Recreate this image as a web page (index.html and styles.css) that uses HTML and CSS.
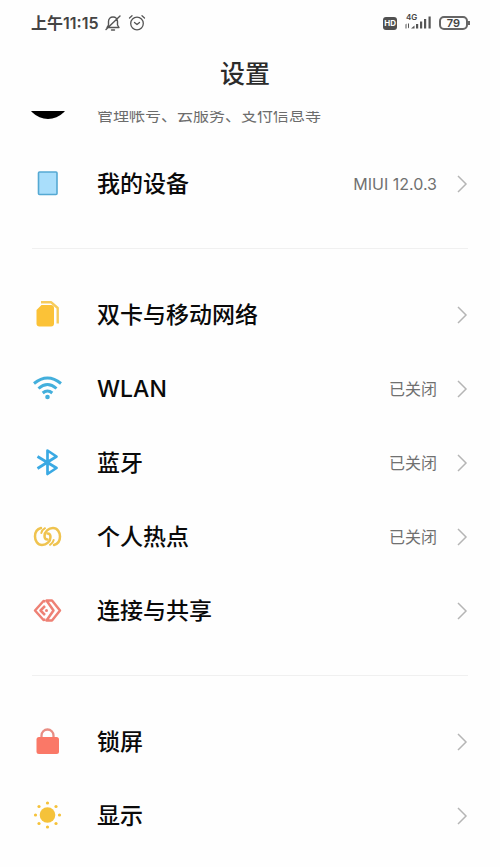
FILE: index.html
```html
<!DOCTYPE html>
<html lang="zh-CN">
<head>
<meta charset="utf-8">
<meta name="viewport" content="width=device-width, initial-scale=1">
<title>设置</title>
<link rel="stylesheet" href="styles.css">
</head>
<body>
<div class="status-bar">
  <span class="clock">上午11:15</span>
  <svg class="status-icon" width="18" height="18" viewBox="0 0 18 18" fill="none" stroke="#555" stroke-width="1.4" stroke-linecap="round" stroke-linejoin="round"><path d="M3 13.5h12L13.500 11V7.500C13.500 4.800 11.600 3 9 3S4.500 4.800 4.500 7.500V11ZM7.500 16h3M16 2 2 15.500"/></svg>
  <svg class="status-icon" width="18" height="18" viewBox="0 0 18 18" fill="none" stroke="#555" stroke-width="1.300" stroke-linecap="round" stroke-linejoin="round"><circle cx="9" cy="9.500" r="6.300"/><path d="M6.500 8.500 9 10.500l2.500-2M1.500 4 4 1.800M16.500 4 14 1.800"/></svg>
  <span class="status-right">
    <span class="hd">HD</span>
    <span class="signal">
      <span class="network">4G</span>
      <svg width="28" height="16" viewBox="0 0 28 16" fill="#555"><path d="M1.500 9.500 2.500 8.500v5h-1ZM4 8.500h1v4l-1 1ZM7 13.500l3.500-3v3ZM12 9h2.200v4.500H12ZM16 6.500h2.200v7H16ZM20 4h2.200v9.500H20ZM24.500 1.500h2.200v12h-2.200Z"/></svg>
    </span>
    <span class="battery">79</span>
  </span>
</div>

<header class="title-bar"><h1>设置</h1></header>

<main class="settings">
  <section class="group">
    <a class="account" href="#account">
      <span class="avatar"></span>
      <span class="account-note">管理帐号、云服务、支付信息等</span>
    </a>
    <a class="row" href="#device">
      <svg class="icon" viewBox="0 0 32 32"><rect x="6.500" y="4" width="18.500" height="22.500" rx="1" fill="#a9defb" stroke="#55a9d3" stroke-width="1.600"/></svg>
      <span class="label">我的设备</span>
      <span class="value">MIUI 12.0.3</span>
      <svg class="chevron" viewBox="0 0 12 20"><path d="m2 2 8 8-8 8"/></svg>
    </a>
  </section>

  <section class="group">
    <a class="row" href="#sim">
      <svg class="icon" viewBox="0 0 32 32"><path d="M4.500 11 9.500 6H19q3 0 3 3v15.500q0 3-3 3H7.500q-3 0-3-3Z" fill="#fbc237"/><path d="M9 3.200H19L25.700 9v15.500" fill="none" stroke="#f6cb5c" stroke-width="2.400" stroke-linejoin="round"/></svg>
      <span class="label">双卡与移动网络</span>
      <svg class="chevron" viewBox="0 0 12 20"><path d="m2 2 8 8-8 8"/></svg>
    </a>
    <a class="row" href="#wlan">
      <svg class="icon" viewBox="0 0 32 32"><g fill="none" stroke="#43afdc" stroke-width="3"><path d="M2 10.500Q15.500-.5 29 10.500"/><path d="M6.500 15.500q9-8 18 0"/><path d="M10.700 20q4.800-4 9.600 0"/></g><circle cx="15.500" cy="24" r="2.300" fill="#43afdc"/></svg>
      <span class="label">WLAN</span>
      <span class="value">已关闭</span>
      <svg class="chevron" viewBox="0 0 12 20"><path d="m2 2 8 8-8 8"/></svg>
    </a>
    <a class="row" href="#bluetooth">
      <svg class="icon" viewBox="0 0 32 32"><path d="M5.500 9.500 24.500 21 15.500 27V3.500l9 6L5.500 21.500" fill="none" stroke="#3aa9e3" stroke-width="2.700" stroke-linejoin="round"/></svg>
      <span class="label">蓝牙</span>
      <span class="value">已关闭</span>
      <svg class="chevron" viewBox="0 0 12 20"><path d="m2 2 8 8-8 8"/></svg>
    </a>
    <a class="row" href="#hotspot">
      <svg class="icon" viewBox="0 0 32 32"><g fill="none" stroke="#efc34f" stroke-width="2.500" stroke-linecap="round"><path d="M9 7C5 8 3 11.500 3 15.500S5.500 24 10 24s8.500-3.500 8.500-8c0-2-1-3.500-3-3.500"/><path d="M22 24c4-1 6-4.500 6-8.500S25.500 7 21 7s-8.500 3.500-8.500 8c0 2 1 3.500 3 3.500"/><path d="M13 7.200Q10 9 9.300 12M18 23.800q3-1.800 3.700-4.800" stroke-width="2"/></g></svg>
      <span class="label">个人热点</span>
      <span class="value">已关闭</span>
      <svg class="chevron" viewBox="0 0 12 20"><path d="m2 2 8 8-8 8"/></svg>
    </a>
    <a class="row" href="#sharing">
      <svg class="icon" viewBox="0 0 32 32"><g fill="none" stroke="#ee8175" stroke-width="2.500" stroke-linejoin="round"><path d="M13.500 24.500 11.500 25 3 15.500 11.500 6l2 .5"/><path d="M14.500 5.500H20l8 10-8 10h-5.500L21.500 15.500Z"/><path d="m13 11-4.500 4.500L13 20"/></g><circle cx="14.500" cy="15.500" r="1.500" fill="#ee8175"/></svg>
      <span class="label">连接与共享</span>
      <svg class="chevron" viewBox="0 0 12 20"><path d="m2 2 8 8-8 8"/></svg>
    </a>
  </section>

  <section class="group">
    <a class="row" href="#lock">
      <svg class="icon" viewBox="0 0 32 32"><path d="M9.500 13V9.500a6 6 0 0 1 12 0V13" fill="none" stroke="#e88d83" stroke-width="2.300"/><rect x="4.500" y="11" width="22.500" height="17" rx="2.500" fill="#fa7867"/></svg>
      <span class="label">锁屏</span>
      <svg class="chevron" viewBox="0 0 12 20"><path d="m2 2 8 8-8 8"/></svg>
    </a>
    <a class="row" href="#display">
      <svg class="icon" viewBox="0 0 32 32" fill="#f5c23a"><circle cx="15.500" cy="15" r="7.800"/><circle cx="15.500" cy="3" r="1.600"/><circle cx="15.500" cy="27" r="1.600"/><circle cx="3.500" cy="15" r="1.600"/><circle cx="27.500" cy="15" r="1.600"/><circle cx="7" cy="6.500" r="1.600"/><circle cx="24" cy="6.500" r="1.600"/><circle cx="7" cy="23.500" r="1.600"/><circle cx="24" cy="23.500" r="1.600"/></svg>
      <span class="label">显示</span>
      <svg class="chevron" viewBox="0 0 12 20"><path d="m2 2 8 8-8 8"/></svg>
    </a>
  </section>
</main>
</body>
</html>
```
FILE: styles.css
```css
* { box-sizing: border-box; }

body {
  margin: 0;
  background: #fefefe;
  color: #0a0a0a;
  font-family: Inter, "Noto Sans CJK SC", sans-serif;
}

.status-bar {
  display: flex;
  align-items: center;
  gap: 6px;
  height: 46px;
  padding: 0 32px 0 31px;
  color: #444;
}

.clock {
  font-size: 16px;
  font-weight: 600;
  line-height: 24px;
}

.status-right {
  display: flex;
  align-items: center;
  gap: 7px;
  margin-left: auto;
}

.hd {
  padding: 0 1px;
  border-radius: 3px;
  background: #505050;
  color: #fff;
  font-size: 8px;
  font-weight: 700;
  line-height: 13px;
}

.signal {
  position: relative;
  display: flex;
}

.network {
  position: absolute;
  top: -2px;
  left: 2px;
  font-size: 8px;
  font-weight: 600;
  line-height: 8px;
}

.battery {
  position: relative;
  width: 29px;
  border: 2px solid #666;
  border-radius: 5px;
  font-size: 11px;
  font-weight: 600;
  line-height: 10px;
  text-align: center;
}

.battery::after {
  content: "";
  position: absolute;
  top: 3px;
  right: -4px;
  width: 2px;
  height: 4px;
  background: #666;
}

.title-bar {
  height: 65px;
  padding: 10px 10px 0 0;
}

h1 {
  margin: 0;
  color: #2b2b2b;
  font-size: 25px;
  font-weight: 500;
  line-height: 36px;
  text-align: center;
}

.settings { overflow: hidden; }

.group { padding: 0 32px 27px; }

.group + .group { padding-top: 29px; }

.group + .group::before {
  content: "";
  display: block;
  height: 1px;
  margin-top: -29px;
  margin-bottom: 29px;
  background: #f0f0f0;
}

a {
  color: inherit;
  text-decoration: none;
}

.account {
  display: flex;
  height: 74px;
  margin-top: -38px;
  padding-top: 2px;
}

.avatar {
  width: 44px;
  height: 44px;
  margin: 0 27px 0 -6px;
  border-radius: 50%;
  background: #000;
}

.account-note {
  margin-top: 28px;
  color: #6c6c6c;
  font-size: 16px;
  line-height: 24px;
}

.row {
  display: flex;
  align-items: center;
  height: 74px;
}

.icon {
  flex: none;
  width: 32px;
  height: 32px;
  margin-right: 33px;
}

.label {
  flex: 1;
  font-size: 23px;
  font-weight: 500;
  line-height: 36px;
}

.value {
  color: #707070;
  font-size: 16px;
  line-height: 24px;
}

.chevron {
  flex: none;
  width: 12px;
  height: 20px;
  margin-left: 19px;
  fill: none;
  stroke: #b5b5b5;
  stroke-width: 1.5;
}
```
